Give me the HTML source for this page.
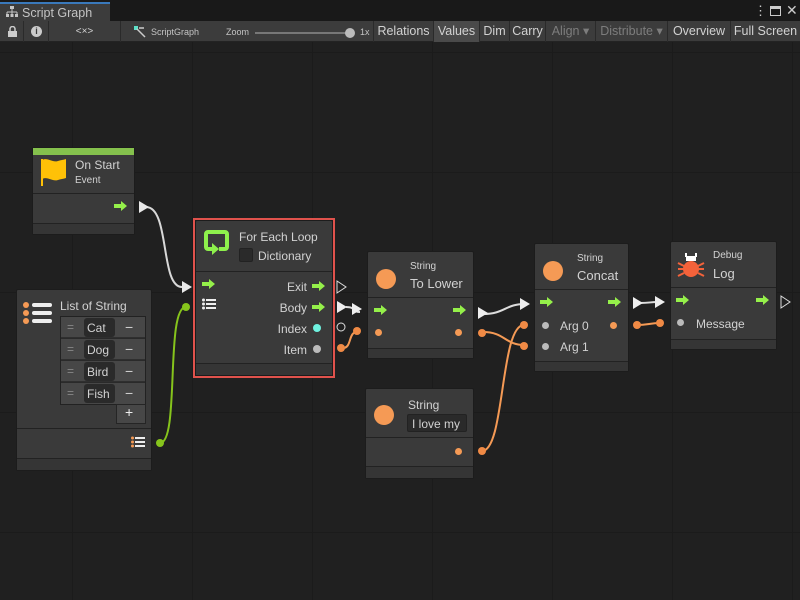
<!DOCTYPE html>
<html><head><style>
*{margin:0;padding:0;box-sizing:border-box}
body{width:800px;height:600px;overflow:hidden;background:#202020;font-family:"Liberation Sans",sans-serif;color:#d2d2d2;position:relative}
.abs{position:absolute}
.tabbar{left:0;top:0;width:800px;height:21px;background:#191919}
.tab{left:0;top:2px;width:110px;height:19px;background:#3c3c3c;border-top:2px solid #3a79bb;font-size:12.5px;color:#c4c4c4;padding:2px 0 0 22px}
.tool{left:0;top:21px;width:800px;height:21px;background:#3c3c3c;border-bottom:1px solid #232323}
.btn{position:absolute;top:21px;height:21px;line-height:21px;font-size:12.5px;color:#d2d2d2;text-align:center;border-right:1px solid #2a2a2a}
.node{position:absolute;background:#3a3a3a;border:1px solid #1c1c1c;border-radius:2px}
.hr{position:absolute;left:0;right:0;height:1px;background:#222}
.ft{position:absolute;left:0;right:0;bottom:0;background:#353535}
.t{position:absolute;font-size:12px;color:#d2d2d2;white-space:nowrap}
.s{font-size:10px}
.dot{position:absolute;width:8px;height:8px;border-radius:50%}
.o{background:#f59a55}
.gl{position:absolute;background:#1b1b1b}
</style></head><body>
<div class="gl" style="left:72px;top:42px;width:1px;height:558px"></div>
<div class="gl" style="left:192px;top:42px;width:1px;height:558px"></div>
<div class="gl" style="left:312px;top:42px;width:1px;height:558px"></div>
<div class="gl" style="left:432px;top:42px;width:1px;height:558px"></div>
<div class="gl" style="left:552px;top:42px;width:1px;height:558px"></div>
<div class="gl" style="left:672px;top:42px;width:1px;height:558px"></div>
<div class="gl" style="left:792px;top:42px;width:1px;height:558px"></div>
<div class="gl" style="left:0;top:52px;width:800px;height:1px"></div>
<div class="gl" style="left:0;top:172px;width:800px;height:1px"></div>
<div class="gl" style="left:0;top:292px;width:800px;height:1px"></div>
<div class="gl" style="left:0;top:412px;width:800px;height:1px"></div>
<div class="gl" style="left:0;top:532px;width:800px;height:1px"></div>

<div class="abs tabbar"></div>
<div class="abs tab">Script Graph</div>
<svg class="abs" style="left:6px;top:6px" width="12" height="11"><rect x="4" y="0" width="4" height="3" fill="#c4c4c4"/><path d="M6 3v3M1 6h10M1 6v2M6 6v2M11 6v2" stroke="#c4c4c4"/><rect x="0" y="8" width="3" height="3" fill="#c4c4c4"/><rect x="4.5" y="8" width="3" height="3" fill="#c4c4c4"/><rect x="9" y="8" width="3" height="3" fill="#c4c4c4"/></svg>
<div class="t" style="left:754px;top:3px;font-size:13px;color:#ccc">⋮</div>
<div class="abs" style="left:770px;top:6px;width:11px;height:10px;border:1.5px solid #ccc;border-top-width:3px"></div>
<div class="t" style="left:786px;top:2px;font-size:14px;color:#ccc">✕</div>
<div class="abs tool"></div>
<div class="btn" style="left:0;width:24px"></div>
<svg class="abs" style="left:8px;top:26px" width="9" height="11"><path d="M2 5V3a2.5 2.5 0 0 1 5 0v2" fill="none" stroke="#ccc" stroke-width="1.5"/><rect x="0" y="5" width="9" height="6" fill="#ccc"/></svg>
<div class="btn" style="left:24px;width:25px"></div>
<div class="abs" style="left:31px;top:26px;width:11px;height:11px;border-radius:50%;background:#ccc;color:#3c3c3c;font-size:9px;line-height:11px;font-weight:bold;text-align:center">i</div>
<div class="btn" style="left:49px;width:72px;font-size:10px">&lt;×&gt;</div>
<svg class="abs" style="left:134px;top:26px" width="12" height="12"><rect x="0" y="0" width="4" height="4" fill="#5ee0c8"/><path d="M3 3l8 8M5 2h5" stroke="#ccc" stroke-width="1.5"/></svg>
<div class="t" style="left:151px;top:27px;font-size:9px;color:#c4c4c4">ScriptGraph</div>
<div class="t" style="left:226px;top:27px;font-size:9px;color:#c4c4c4">Zoom</div>
<div class="abs" style="left:255px;top:32px;width:95px;height:2px;background:#777"></div>
<div class="abs" style="left:345px;top:28px;width:10px;height:10px;border-radius:50%;background:#bbb"></div>
<div class="t" style="left:360px;top:27px;font-size:9px;color:#c4c4c4">1x</div>
<div class="abs" style="left:373px;top:21px;width:1px;height:21px;background:#2a2a2a"></div>
<div class="btn" style="left:374px;width:60px">Relations</div>
<div class="btn" style="left:434px;width:46px;background:#4a4a4a">Values</div>
<div class="btn" style="left:480px;width:30px">Dim</div>
<div class="btn" style="left:510px;width:36px">Carry</div>
<div class="btn" style="left:546px;width:50px;color:#7d7d7d">Align ▾</div>
<div class="btn" style="left:596px;width:72px;color:#7d7d7d">Distribute ▾</div>
<div class="btn" style="left:668px;width:63px">Overview</div>
<div class="btn" style="left:731px;width:69px;border:none">Full Screen</div>

<svg class="abs" style="left:0;top:0" width="800" height="600">
<g fill="none" stroke-width="2">
<path d="M146 207 C170 207,160 287,182 287" stroke="#d8d8d8"/>
<path d="M160 443 C180 443,165 307,186 307" stroke="#86c41c"/>
<path d="M343 348 C352 348,348 332,357 332" stroke="#f59a55"/>
<path d="M346 307 C356 307,352 312,360 312" stroke="#ddd"/>
<path d="M483 314 C505 314,505 304,525 304" stroke="#ddd"/>
<path d="M483 332 C505 332,505 345,524 345" stroke="#f59a55"/>
<path d="M482 451 C505 451,500 325,524 325" stroke="#f59a55"/>
<path d="M637 325 C648 325,650 323,660 323" stroke="#f59a55"/>
<path d="M640 303 C650 303,650 302,657 302" stroke="#ddd"/>
</g>
<path d="M139 201l10 6-10 6z" fill="#e8e8e8"/>
<path d="M182 281l10 6-10 6z" fill="#e8e8e8"/>
<path d="M337 281l9 6-9 6z" fill="none" stroke="#ddd"/>
<path d="M337 301l10 6-10 6z" fill="#eee"/>
<path d="M352 303l10 6-10 6z" fill="#eee"/>
<circle cx="341" cy="327" r="4" fill="none" stroke="#ddd"/>
<path d="M478 307l10 6-10 6z" fill="#eee"/>
<path d="M520 298l10 6-10 6z" fill="#eee"/>
<path d="M633 297l10 6-10 6z" fill="#eee"/>
<path d="M655 296l10 6-10 6z" fill="#eee"/>
<path d="M781 296l9 6-9 6z" fill="none" stroke="#ddd"/>
<g fill="#f08a45"><circle cx="186" cy="307" r="4" fill="#86c41c"/><circle cx="160" cy="443" r="4" fill="#86c41c"/>
<circle cx="341" cy="348" r="4"/><circle cx="357" cy="331" r="4"/>
<circle cx="482" cy="333" r="4"/><circle cx="524" cy="325" r="4"/><circle cx="524" cy="346" r="4"/>
<circle cx="482" cy="451" r="4"/><circle cx="637" cy="325" r="4"/><circle cx="660" cy="323" r="4"/></g>
</svg>

<div class="node" style="left:32px;top:147px;width:103px;height:88px">
<div class="abs" style="left:0;top:0;right:0;height:7px;background:#85c14d"></div>
<div class="hr" style="top:45px"></div><div class="ft" style="top:75px;border-top:1px solid #222"></div>
</div>
<svg class="abs" style="left:40px;top:157px" width="28" height="30"><path d="M2 3c6-3 10 3 16 1c3-1 5-1 8-2v19c-3 1-5 1-8 2c-6 2-10-4-16-1z" fill="#ffc107"/><path d="M2 2v27" stroke="#ffc107" stroke-width="2"/></svg>
<div class="t" style="left:75px;top:158px">On Start</div>
<div class="t s" style="left:75px;top:175px">Event</div>

<div class="abs" style="left:193px;top:218px;width:142px;height:160px;border:2px solid #e0524c"></div>
<div class="node" style="left:195px;top:220px;width:138px;height:156px">
<div class="hr" style="top:50px"></div><div class="ft" style="top:142px;border-top:1px solid #222"></div></div>
<svg class="abs" style="left:203px;top:229px" width="28" height="28"><path d="M9 20H5a2 2 0 0 1-2-2V5a2 2 0 0 1 2-2h17a2 2 0 0 1 2 2v13a2 2 0 0 1-2 2h-6" fill="none" stroke="#8ef04c" stroke-width="4"/><path d="M9 14l7 6-7 6z" fill="#8ef04c"/></svg>
<div class="t" style="left:239px;top:230px">For Each Loop</div>
<div class="abs" style="left:239px;top:248px;width:14px;height:14px;background:#2a2a2a;border:1px solid #222;border-radius:2px"></div>
<div class="t" style="left:258px;top:249px">Dictionary</div>
<div class="t" style="right:493px;top:280px">Exit</div>
<div class="t" style="right:493px;top:301px">Body</div>
<div class="t" style="right:493px;top:322px">Index</div>
<div class="t" style="right:493px;top:343px">Item</div>
<div class="dot" style="left:313px;top:324px;background:#6ff2e0"></div>
<div class="dot" style="left:313px;top:345px;background:#bbb"></div>
<svg class="abs" style="left:202px;top:298px" width="14" height="12"><g fill="#eee"><circle cx="1.5" cy="2" r="1.5"/><circle cx="1.5" cy="6" r="1.5"/><circle cx="1.5" cy="10" r="1.5"/><rect x="4" y="1" width="10" height="2"/><rect x="4" y="5" width="10" height="2"/><rect x="4" y="9" width="10" height="2"/></g></svg>

<div class="node" style="left:16px;top:289px;width:136px;height:182px">
<div class="hr" style="top:138px"></div><div class="ft" style="top:168px;border-top:1px solid #222"></div></div>
<svg class="abs" style="left:23px;top:302px" width="30" height="24"><g fill="#f59a55"><circle cx="3" cy="3" r="3"/><circle cx="3" cy="11" r="3"/><circle cx="3" cy="19" r="3"/></g><g fill="#eee"><rect x="9" y="1" width="20" height="4" rx="2"/><rect x="9" y="9" width="20" height="4" rx="2"/><rect x="9" y="17" width="20" height="4" rx="2"/></g></svg>
<div class="t" style="left:60px;top:299px">List of String</div>
<div class="abs" style="left:60px;top:316px;width:86px;height:89px;background:#2a2a2a;border:1px solid #222"></div>
<div class="abs" style="left:116px;top:404px;width:30px;height:20px;background:#474747;border:1px solid #252525"></div>
<div class="t" style="left:125px;top:404px;font-size:14px;color:#eee">+</div>
<div class="abs" style="left:61px;top:317px;width:84px;height:21px;background:#474747;border-bottom:1px solid #2f2f2f"></div>
<div class="abs" style="left:61px;top:339px;width:84px;height:21px;background:#474747;border-bottom:1px solid #2f2f2f"></div>
<div class="abs" style="left:61px;top:361px;width:84px;height:21px;background:#474747;border-bottom:1px solid #2f2f2f"></div>
<div class="abs" style="left:61px;top:383px;width:84px;height:21px;background:#474747"></div>
<div class="abs" style="left:84px;top:318px;width:31px;height:19px;background:#2a2a2a;border-radius:3px"></div>
<div class="abs" style="left:84px;top:340px;width:31px;height:19px;background:#2a2a2a;border-radius:3px"></div>
<div class="abs" style="left:84px;top:362px;width:31px;height:19px;background:#2a2a2a;border-radius:3px"></div>
<div class="abs" style="left:84px;top:384px;width:31px;height:19px;background:#2a2a2a;border-radius:3px"></div>
<div class="t" style="left:87px;top:321px">Cat</div><div class="t" style="left:87px;top:343px">Dog</div><div class="t" style="left:87px;top:365px">Bird</div><div class="t" style="left:87px;top:387px">Fish</div>
<div class="t" style="left:67px;top:320px;color:#888">=</div><div class="t" style="left:67px;top:342px;color:#888">=</div><div class="t" style="left:67px;top:364px;color:#888">=</div><div class="t" style="left:67px;top:386px;color:#888">=</div>
<div class="t" style="left:125px;top:319px;font-size:14px">−</div><div class="t" style="left:125px;top:341px;font-size:14px">−</div><div class="t" style="left:125px;top:363px;font-size:14px">−</div><div class="t" style="left:125px;top:385px;font-size:14px">−</div>
<svg class="abs" style="left:131px;top:436px" width="14" height="12"><g fill="#f59a55"><circle cx="1.5" cy="2" r="1.5"/><circle cx="1.5" cy="6" r="1.5"/><circle cx="1.5" cy="10" r="1.5"/></g><g fill="#eee"><rect x="4" y="1" width="10" height="2"/><rect x="4" y="5" width="10" height="2"/><rect x="4" y="9" width="10" height="2"/></g></svg>

<div class="node" style="left:367px;top:251px;width:107px;height:108px">
<div class="hr" style="top:45px"></div><div class="ft" style="top:96px;border-top:1px solid #222"></div></div>
<div class="abs" style="left:376px;top:269px;width:20px;height:20px;border-radius:50%;background:#f59a55"></div>
<div class="t s" style="left:410px;top:261px">String</div>
<div class="t" style="left:410px;top:276px;font-size:13px">To Lower</div>
<div class="dot o" style="left:375px;top:329px;width:7px;height:7px"></div>
<div class="dot o" style="left:455px;top:329px;width:7px;height:7px"></div>

<div class="node" style="left:365px;top:388px;width:109px;height:91px">
<div class="hr" style="top:48px"></div><div class="ft" style="top:77px;border-top:1px solid #222"></div></div>
<div class="abs" style="left:374px;top:405px;width:20px;height:20px;border-radius:50%;background:#f59a55"></div>
<div class="t" style="left:408px;top:398px">String</div>
<div class="abs" style="left:407px;top:414px;width:60px;height:18px;background:#2a2a2a;border:1px solid #222;border-radius:2px"></div>
<div class="t" style="left:412px;top:417px">I love my</div>
<div class="dot o" style="left:455px;top:448px;width:7px;height:7px"></div>

<div class="node" style="left:534px;top:243px;width:95px;height:129px">
<div class="hr" style="top:45px"></div><div class="ft" style="top:117px;border-top:1px solid #222"></div></div>
<div class="abs" style="left:543px;top:261px;width:20px;height:20px;border-radius:50%;background:#f59a55"></div>
<div class="t s" style="left:577px;top:253px">String</div>
<div class="t" style="left:577px;top:268px;font-size:13px">Concat</div>
<div class="dot" style="left:542px;top:322px;width:7px;height:7px;background:#bbb"></div>
<div class="dot" style="left:542px;top:343px;width:7px;height:7px;background:#bbb"></div>
<div class="t" style="left:560px;top:319px">Arg 0</div><div class="t" style="left:560px;top:340px">Arg 1</div>
<div class="dot o" style="left:610px;top:322px;width:7px;height:7px"></div>

<div class="node" style="left:670px;top:241px;width:107px;height:109px">
<div class="hr" style="top:45px"></div><div class="ft" style="top:97px;border-top:1px solid #222"></div></div>
<svg class="abs" style="left:677px;top:253px" width="28" height="26"><path d="M9 0v4M19 0v4" stroke="#fff" stroke-width="2"/><rect x="9" y="3" width="10" height="5" fill="#fff"/><ellipse cx="14" cy="16" rx="8" ry="8" fill="#f4623a"/><path d="M1 10l6 3M1 16h6M1 23l6-3M27 10l-6 3M27 16h-6M27 23l-6-3" stroke="#f4623a" stroke-width="2"/></svg>
<div class="t s" style="left:713px;top:250px">Debug</div>
<div class="t" style="left:713px;top:266px;font-size:13px">Log</div>
<div class="dot" style="left:677px;top:319px;width:7px;height:7px;background:#bbb"></div>
<div class="t" style="left:696px;top:317px">Message</div>

<svg class="abs" style="left:0;top:0;pointer-events:none" width="800" height="600">
<defs><path id="ga" d="M0 3h7V0l6 5-6 5V7H0z" fill="#95f04a"/></defs>
<use href="#ga" x="114" y="201"/>
<use href="#ga" x="202" y="279"/><use href="#ga" x="312" y="281"/><use href="#ga" x="312" y="302"/>
<use href="#ga" x="374" y="305"/><use href="#ga" x="453" y="305"/>
<use href="#ga" x="540" y="297"/><use href="#ga" x="608" y="297"/>
<use href="#ga" x="676" y="295"/><use href="#ga" x="756" y="295"/>
</svg>
</body></html>
